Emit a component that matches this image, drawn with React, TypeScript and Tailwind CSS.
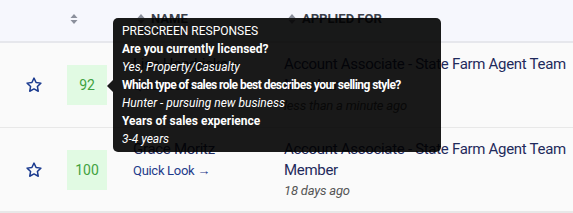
import React from "react";

function SortIcon() {
  return (
    <svg width="8" height="12" viewBox="0 0 8 12" className="shrink-0">
      <path d="M4 1 L7.5 5 H0.5 Z" fill="#8b909c" />
      <path d="M4 11 L7.5 7 H0.5 Z" fill="#8b909c" />
    </svg>
  );
}

function Star() {
  return (
    <svg width="18" height="18" viewBox="0 0 24 24" fill="none">
      <path
        d="M12 2.8l2.8 5.9 6.4.8-4.7 4.4 1.2 6.4L12 17.2l-5.7 3.1 1.2-6.4-4.7-4.4 6.4-.8z"
        stroke="#1a3a8f"
        strokeWidth="2"
        strokeLinejoin="round"
      />
    </svg>
  );
}

function Row({
  score,
  name,
  applied,
  when,
  icon,
  border,
}: {
  score: string;
  name: string;
  applied: string;
  when: string;
  icon?: boolean;
  border: string;
}) {
  return (
    <div className={`flex h-[85px] items-start ${border}`}>
      <div className="flex h-full w-[67px] items-center justify-center">
        <Star />
      </div>
      <div className="mt-[22px] flex h-[40px] w-[40px] items-center justify-center bg-[#e1fae3] text-[14px] text-[#3fa23f]">
        {score}
      </div>
      <div className="ml-[26px] mt-[11px] flex w-[151px] flex-col">
        <div className="flex h-[21px] items-center gap-[4px] text-[15px] tracking-[-0.3px] text-[#1f2a5c]">
          <span>{name}</span>
          {icon && (
            <svg width="10" height="10" viewBox="0 0 10 10">
              <path d="M1 1 L9 5 L1 9 Z" fill="#2e7d32" />
            </svg>
          )}
        </div>
        <div className="mt-[1px] h-[20px] text-[13px] leading-[20px] tracking-[-0.3px] text-[#1e3a8a]">
          Quick Look →
        </div>
      </div>
      <div className="mt-[11px] flex min-w-0 flex-1 flex-col">
        <div className="w-[285px] text-[15px] leading-[21px] tracking-[-0.3px] text-[#1f2a5c]">{applied}</div>
        <div className="text-[13px] italic leading-[20px] tracking-[-0.2px] text-[#555]">{when}</div>
      </div>
    </div>
  );
}

export default function App() {
  return (
    <div
      className="relative h-[213px] w-[573px] overflow-hidden bg-[#fafafa]"
      style={{ fontFamily: "Roboto, 'Liberation Sans', sans-serif" }}
    >
      <div className="flex h-[43px] items-center border-b-2 border-[#e6e7ec] bg-[#f6f7fd] pb-[3px] text-[13px] font-bold text-[#3a3f4a]">
        <div className="w-[70px]" />
        <div className="flex w-[37px] justify-start">
          <SortIcon />
        </div>
        <div className="ml-[30px] flex w-[147px] items-center gap-[6px]">
          <SortIcon />
          <span>NAME</span>
        </div>
        <div className="flex items-center gap-[6px] pl-[4px]">
          <SortIcon />
          <span>APPLIED FOR</span>
        </div>
      </div>
      <Row
        score="92"
        name="Lisa Hendricks"
        applied="Account Associate - State Farm Agent Team Member"
        when="less than a minute ago"
        icon
        border="border-b border-[#e8e8e8]"
      />
      <Row
        score="100"
        name="Grace Moritz"
        applied="Account Associate - State Farm Agent Team Member"
        when="18 days ago"
        border="border-b-2 border-[#e8e8e8]"
      />

      <div className="absolute left-[113px] top-[18px] w-[328px] whitespace-nowrap rounded-[5px] bg-black/90 px-[9px] py-[4px] text-[12px] leading-[18px] text-white">
        <div className="absolute left-[-6px] top-[62px] h-0 w-0 border-y-[6px] border-r-[6px] border-y-transparent border-r-black/90" />
        <div>PRESCREEN RESPONSES</div>
        <div className="font-bold">Are you currently licensed?</div>
        <div className="italic">Yes, Property/Casualty</div>
        <div className="font-bold tracking-[-0.55px]">Which type of sales role best describes your selling style?</div>
        <div className="italic">Hunter - pursuing new business</div>
        <div className="font-bold">Years of sales experience</div>
        <div className="italic">3-4 years</div>
      </div>
    </div>
  );
}
